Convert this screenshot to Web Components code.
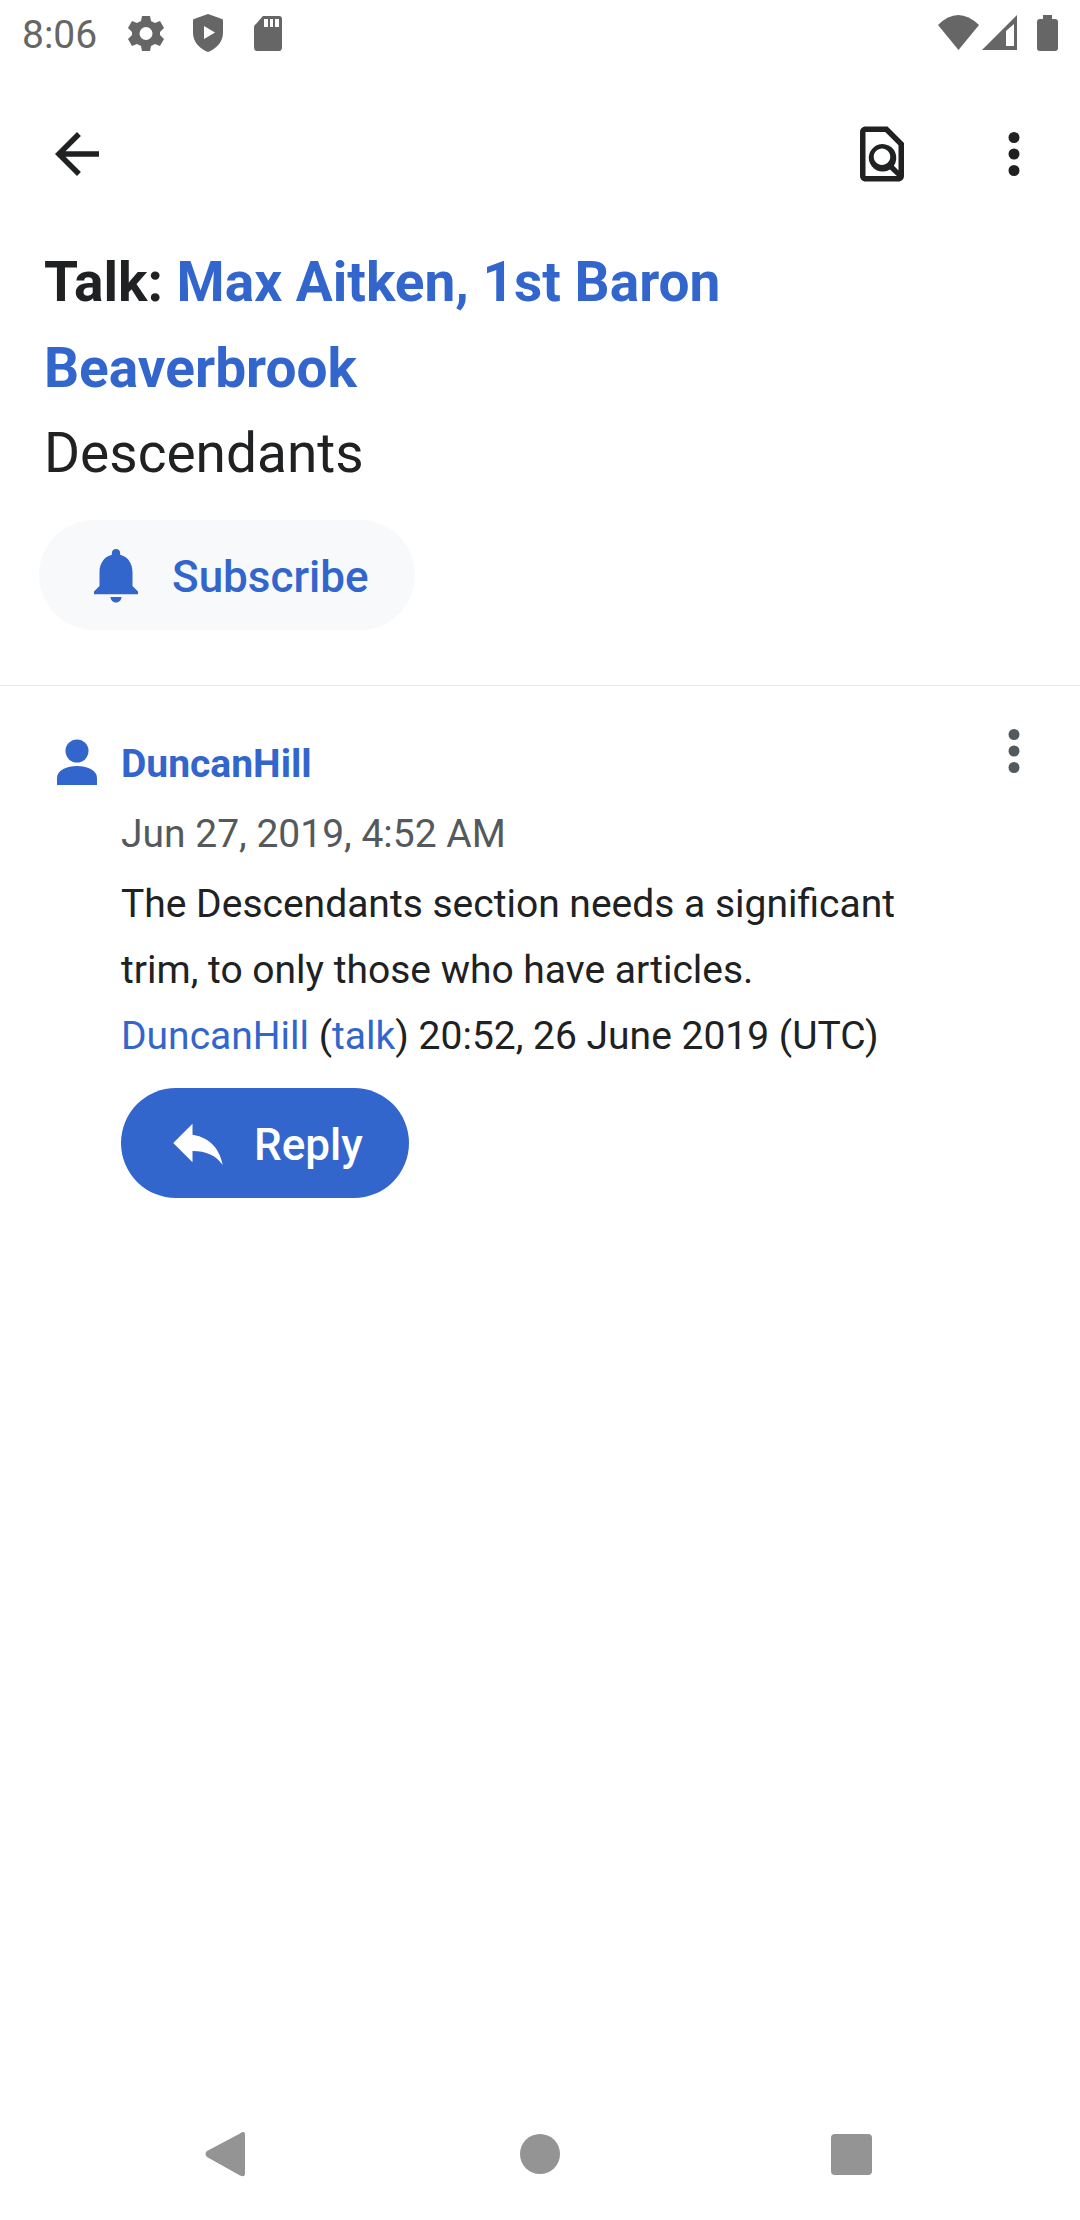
<!DOCTYPE html>
<html lang="en">
<head>
<meta charset="utf-8">
<meta name="viewport" content="width=device-width, initial-scale=1">
<title>Talk: Max Aitken, 1st Baron Beaverbrook</title>
<style>
:root{--ink:#202122;--muted:#54595d;--accent:#3366cc;--soft:#f8f9fa;--line:#e8e8e8}
body{margin:0;background:#fff;color:var(--ink);font-family:Roboto,"Liberation Sans",sans-serif}
a{color:var(--accent);text-decoration:none}
</style>
</head>
<body>
<talk-page>
  <status-bar slot="status" time="8:06"></status-bar>
  <tool-bar slot="toolbar"></tool-bar>
  <talk-header slot="header">
    <span slot="title">Talk: <a href="#article">Max Aitken, 1st Baron Beaverbrook</a></span>
    <span slot="topic">Descendants</span>
  </talk-header>
  <talk-comment>
    <a slot="author" href="#user">DuncanHill</a>
    <time slot="date" datetime="2019-06-27T04:52">Jun 27, 2019, 4:52 AM</time>
    <span>The Descendants section needs a significant trim, to only those who have articles.<br><a href="#user">DuncanHill</a> (<a href="#talk">talk</a>) 20:52, 26 June 2019 (UTC)</span>
  </talk-comment>
  <nav-bar slot="nav"></nav-bar>
</talk-page>
<script>
const define = (name, html) => customElements.define(name, class extends HTMLElement {
  constructor() {
    super();
    const t = document.createElement('template');
    t.innerHTML = '<style>*{box-sizing:border-box}a{color:inherit;text-decoration:none}svg{display:block}button{font:inherit;color:inherit;background:none;border:0;padding:0;margin:0}</style>' + html;
    this.attachShadow({mode: 'open'}).append(t.content.cloneNode(true));
    const time = this.shadowRoot.querySelector('[data-time]');
    if (time) time.textContent = this.getAttribute('time');
    const icon = this.shadowRoot.querySelector('[data-icon]');
    if (icon) icon.setAttribute('d', icons[this.getAttribute('icon')]);
    const button = this.shadowRoot.querySelector('[data-labelled]');
    if (button) button.setAttribute('aria-label', this.getAttribute('label'));
  }
});

const icons = {
  back: 'M20 11H7.83l5.59-5.59L12 4l-8 8 8 8 1.41-1.41L7.83 13H20v-2z',
  find: 'M20 19.59V8l-6-6H6c-1.1 0-1.99.9-1.99 2L4 20c0 1.1.89 2 1.99 2H18c1.1 0 2-.9 2-2zM18 8.83V18l-1.7-1.75A5 5 0 1 0 14.9 17.6L17.4 20H6V4h7.17L18 8.83zM9 13c0-1.66 1.34-3 3-3s3 1.34 3 3-1.34 3-3 3-3-1.34-3-3z',
  more: 'M12 8a2 2 0 1 0 0-4 2 2 0 0 0 0 4zm0 2a2 2 0 1 0 0 4 2 2 0 0 0 0-4zm0 6a2 2 0 1 0 0 4 2 2 0 0 0 0-4z',
  bell: 'M12 22c1.1 0 2-.9 2-2h-4c0 1.1.9 2 2 2zm6-6v-5c0-3.07-1.64-5.64-4.5-6.32V4a1.5 1.5 0 0 0-3 0v.68C7.63 5.36 6 7.92 6 11v5l-2 2v1h16v-1l-2-2z',
  reply: 'M10 9V5l-7 7 7 7v-4.1c5 0 8.5 1.6 11 5.1-1-5-4-10-11-11z'
};

define('icon-button', `<style>
  :host{display:block}button{display:block}
  </style><button data-labelled><svg width="66" height="66" viewBox="0 0 24 24" fill="currentColor"><path data-icon fill-rule="evenodd"/></svg></button>`);

define('pill-button', `<style>
  :host{display:inline-flex;border-radius:55px;background:var(--accent);color:#fff}
  :host([soft]){background:var(--soft);color:var(--accent)}
  button{display:flex;align-items:center;gap:23px;height:110px;padding:0 46px 0 44px;font-size:44px;line-height:66px;font-weight:500}
  span{padding-top:4px}
  </style><button><svg width="66" height="66" viewBox="0 0 24 24" fill="currentColor"><path data-icon/></svg><span><slot></slot></span></button>`);

define('status-bar', `<style>
  :host{display:flex;box-sizing:border-box;align-items:center;justify-content:space-between;height:66px;padding:4px 20px 0 22px;color:#666;font-size:39px;line-height:62px}
  div{display:flex;align-items:center}
  .left{gap:24px}.left span{margin-right:6px}
  .right{gap:2px}
  </style>
  <div class="left"><span data-time></span>
    <svg width="38" height="44" viewBox="0 0 38 44" fill="currentColor"><path fill-rule="evenodd" d="M15 3h8l1 5 4 2 5-2 4 7-4 4v3l4 4-4 7-5-2-4 2-1 5h-8l-1-5-4-2-5 2-4-7 4-4v-3l-4-4 4-7 5 2 4-2zM19 14a6.500 6.500 0 1 0 0 13 6.500 6.500 0 0 0 0-13z"/></svg>
    <svg width="38" height="44" viewBox="0 0 38 44" fill="currentColor"><path fill-rule="evenodd" d="M19 1 33 6q1 0 1 2v12c0 9-7 16-15 19C11 36 4 29 4 20V8q0-2 1-2zM15 13v13l11-6.500z"/></svg>
    <svg width="38" height="44" viewBox="3 0 38 44" fill="currentColor"><path fill-rule="evenodd" d="M15 3h16q3 0 3 3v28q0 4-3 4H9q-3 0-3-4V14q0-2 2-3l6-7zM16 6v8h4V6zm6 0v8h3V6zm5 0v8h4V6z"/></svg>
  </div>
  <div class="right">
    <svg width="42" height="44" viewBox="0 0 42 44" fill="currentColor"><path d="M0 12Q20 -8 41 12L20.500 37z"/></svg>
    <svg width="38" height="44" viewBox="0 0 38 44" fill="currentColor"><path fill-rule="evenodd" d="M0 37 35 2v35zM24 18v15h8V11z"/></svg>
    <svg width="38" height="44" viewBox="0 0 38 44" fill="currentColor"><path d="M21 2h9v4h3q3 0 3 3v26q0 3-3 3H18q-3 0-3-3V9q0-3 3-3h3z"/></svg>
  </div>`);

define('tool-bar', `<style>
  :host{display:flex;gap:66px;padding:55px 33px 52px 44px}
  .back{margin-right:auto}
  </style>
  <icon-button class="back" icon="back" label="Navigate up"></icon-button>
  <icon-button icon="find" label="Find in page"></icon-button>
  <icon-button icon="more" label="More options"></icon-button>`);

define('talk-header', `<style>
  :host{display:block;padding:0 44px 55px;border-bottom:1px solid var(--line)}
  h1,h2{margin:0;font-size:55px;line-height:86px;font-weight:700}
  h1{max-width:800px}
  h2{font-weight:400;line-height:84px}
  pill-button{margin:25px 0 0 -5px;vertical-align:top}
  </style>
  <h1><slot name="title"></slot></h1>
  <h2><slot name="topic"></slot></h2>
  <pill-button soft icon="bell">Subscribe</pill-button>`);

define('talk-comment', `<style>
  :host{display:flex;align-items:flex-start;padding:32px 33px 0 44px;font-size:39px;line-height:66px}
  .avatar{margin:13px 11px 0 0;color:var(--accent)}
  .main{flex:1;min-width:0;display:flex;flex-direction:column;align-items:flex-start;gap:4px;padding:13px 50px 0 0}
  .author{font-weight:700}
  .date{color:var(--muted)}
  p{margin:0}
  pill-button{margin-top:15px}
  icon-button{color:var(--muted)}
  </style>
  <svg class="avatar" width="66" height="66" viewBox="0 0 66 66" fill="currentColor"><circle cx="33" cy="20" r="11.500"/><path d="M13 54v-7c0-8 10-12 20-12s20 4 20 12v7z"/></svg>
  <div class="main">
    <div class="author"><slot name="author"></slot></div>
    <div class="date"><slot name="date"></slot></div>
    <p><slot></slot></p>
    <pill-button icon="reply">Reply</pill-button>
  </div>
  <icon-button icon="more" label="Comment options"></icon-button>`);

define('nav-bar', `<style>
  :host{display:flex;justify-content:space-between;padding:0 16%;color:#949494}
  button{height:132px}
  </style>
  <button aria-label="Back"><svg width="110" height="132" viewBox="0 0 110 132" fill="currentColor"><path d="M34 63 67 45.500Q72 42 72 47V85Q72 90 67 87.500L34 69Q31 66 34 63z"/></svg></button>
  <button aria-label="Home"><svg width="110" height="132" viewBox="0 0 110 132" fill="currentColor"><circle cx="55" cy="66" r="20"/></svg></button>
  <button aria-label="Recent apps"><svg width="110" height="132" viewBox="0 0 110 132" fill="currentColor"><rect x="34" y="46" width="41" height="41" rx="4"/></svg></button>`);

define('talk-page', `<style>
  :host{display:flex;flex-direction:column;min-height:100vh}
  main{flex:1}
  </style>
  <slot name="status"></slot><slot name="toolbar"></slot>
  <main><slot name="header"></slot><slot></slot></main>
  <slot name="nav"></slot>`);
</script>
</body>
</html>
